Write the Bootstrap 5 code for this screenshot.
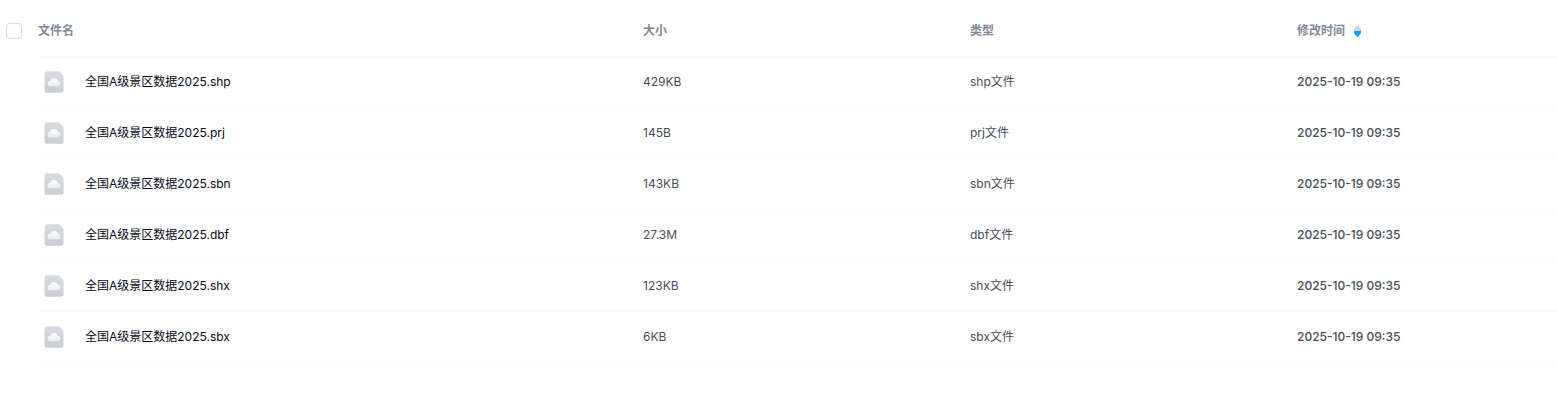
<!DOCTYPE html>
<html lang="zh-CN">
<head>
<meta charset="utf-8">
<meta name="viewport" content="width=device-width, initial-scale=1">
<title>文件列表</title>
<link href="https://cdn.jsdelivr.net/npm/bootstrap@5.3.0/dist/css/bootstrap.min.css" rel="stylesheet">
<style>
body{font-family:Inter,"Noto Sans CJK SC",sans-serif;font-size:12px;line-height:18px;color:#454d5a;background:#fff}
.file-list{padding-top:6px}
.file-table{table-layout:fixed;font-size:12px;color:inherit;--bs-table-bg:transparent;border-collapse:separate;border-spacing:0}
.file-table>:not(caption)>*>*{padding:0;height:51px;border-bottom:1px solid #f7f8fa;color:inherit;box-shadow:none}
.file-table>thead>tr>th{color:#818999;font-weight:700;vertical-align:middle}
.file-table>:not(caption)>tr>.pick-cell{border-bottom-color:transparent;width:38px;padding-left:6px}
.col-size,.col-type{width:21%}
.col-time{width:16.7%}
.file-table .form-check-input{width:16px;height:16px;border:1px solid #d9dae3;border-radius:4px;margin:0}
.file-name{color:#03081a;gap:21px;padding-left:6px}
.file-icon{width:20px;height:22px}
.file-time{font-weight:500}
.sort-btn{color:inherit;font:inherit}
</style>
</head>
<body>
<svg class="position-absolute" width="0" height="0" aria-hidden="true">
<defs>
<linearGradient id="paper" x1="0" y1="0" x2="0" y2="1"><stop stop-color="#d8dce1"/><stop offset="1" stop-color="#c8ccd4"/></linearGradient>
<linearGradient id="cloud" x1="0" y1="0" x2="0" y2="1"><stop stop-color="#fff"/><stop offset="1" stop-color="#e9ebef"/></linearGradient>
</defs>
<symbol id="cloud-file" viewBox="0 0 20 22">
<path fill="url(#paper)" d="M3 .2H14.200q.8 0 1.400.6L18.900 4.200q.6.600.6 1.400V19.300a2.500 2.500 0 0 1-2.500 2.500H3A2.500 2.500 0 0 1 .5 19.300V2.700A2.500 2.500 0 0 1 3 .2z"/>
<path fill="url(#cloud)" d="M6.300 15.300a2.700 2.700 0 0 1-.3-5.400 4.200 4.200 0 0 1 8 0 2.700 2.700 0 0 1-.3 5.400z"/>
</symbol>
</svg>
<main class="file-list">
<table class="table file-table mb-0">
<thead>
<tr>
<th class="pick-cell" scope="col"><input class="form-check-input d-block" type="checkbox" aria-label="全选"></th>
<th scope="col">文件名</th>
<th class="col-size" scope="col">大小</th>
<th class="col-type" scope="col">类型</th>
<th class="col-time" scope="col"><button class="btn sort-btn border-0 p-0 d-flex align-items-center gap-2" type="button">修改时间<svg width="9" height="12" viewBox="0 0 9 12" aria-hidden="true"><path fill="#d2d5dc" d="M1 6V4L3.500.8q1-1 2 0L8 4v2z"/><path fill="#0f9ffb" d="M1 6V8l2.500 3.200q1 1 2 0L8 8V6z"/></svg></button></th>
</tr>
</thead>
<tbody class="align-middle">
<tr><td class="pick-cell"></td><td><a class="file-name d-flex align-items-center text-decoration-none" href="#"><svg class="file-icon" aria-hidden="true"><use href="#cloud-file"/></svg>全国A级景区数据2025.shp</a></td><td>429KB</td><td>shp文件</td><td class="file-time">2025-10-19 09:35</td></tr>
<tr><td class="pick-cell"></td><td><a class="file-name d-flex align-items-center text-decoration-none" href="#"><svg class="file-icon" aria-hidden="true"><use href="#cloud-file"/></svg>全国A级景区数据2025.prj</a></td><td>145B</td><td>prj文件</td><td class="file-time">2025-10-19 09:35</td></tr>
<tr><td class="pick-cell"></td><td><a class="file-name d-flex align-items-center text-decoration-none" href="#"><svg class="file-icon" aria-hidden="true"><use href="#cloud-file"/></svg>全国A级景区数据2025.sbn</a></td><td>143KB</td><td>sbn文件</td><td class="file-time">2025-10-19 09:35</td></tr>
<tr><td class="pick-cell"></td><td><a class="file-name d-flex align-items-center text-decoration-none" href="#"><svg class="file-icon" aria-hidden="true"><use href="#cloud-file"/></svg>全国A级景区数据2025.dbf</a></td><td>27.3M</td><td>dbf文件</td><td class="file-time">2025-10-19 09:35</td></tr>
<tr><td class="pick-cell"></td><td><a class="file-name d-flex align-items-center text-decoration-none" href="#"><svg class="file-icon" aria-hidden="true"><use href="#cloud-file"/></svg>全国A级景区数据2025.shx</a></td><td>123KB</td><td>shx文件</td><td class="file-time">2025-10-19 09:35</td></tr>
<tr><td class="pick-cell"></td><td><a class="file-name d-flex align-items-center text-decoration-none" href="#"><svg class="file-icon" aria-hidden="true"><use href="#cloud-file"/></svg>全国A级景区数据2025.sbx</a></td><td>6KB</td><td>sbx文件</td><td class="file-time">2025-10-19 09:35</td></tr>
</tbody>
</table>
</main>
<script src="https://cdn.jsdelivr.net/npm/bootstrap@5.3.0/dist/js/bootstrap.bundle.min.js"></script>
</body>
</html>
